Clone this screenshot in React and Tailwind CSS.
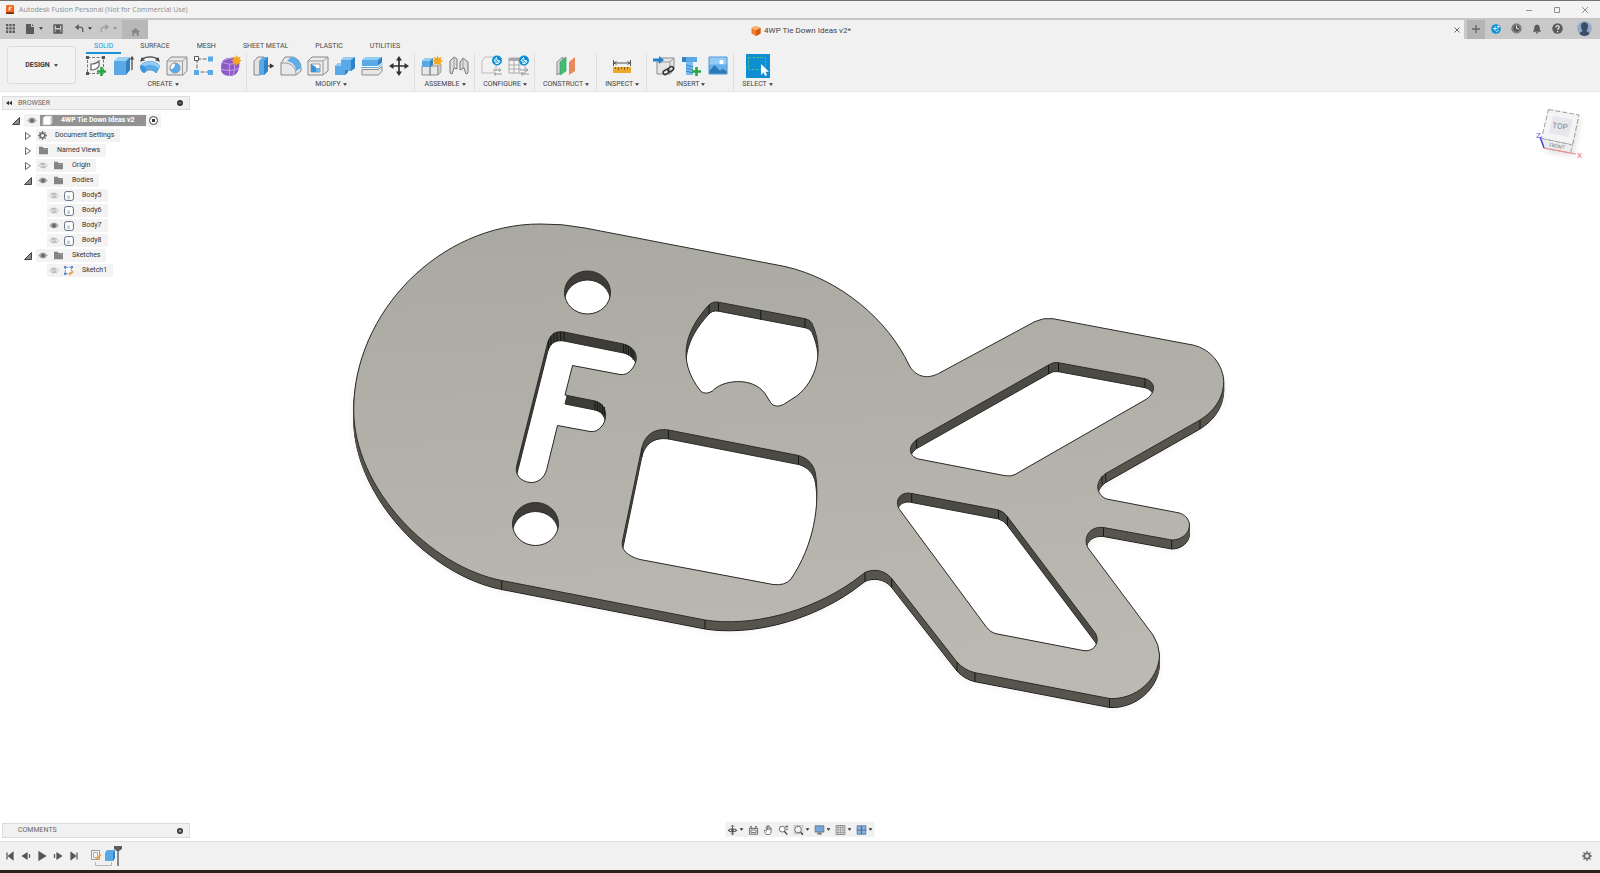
import React from 'react'
import clsx from 'clsx'

/* ---------- small shared pieces ---------- */

const Caret = ({ className }) => (
  <svg viewBox="0 0 6 4" className={clsx('w-1 h-[3px] shrink-0', className)} fill="#333">
    <path d="M0 0h6L3 4z" />
  </svg>
)

const Icon = ({ children, className = 'size-6', box = 24 }) => (
  <svg viewBox={`0 0 ${box} ${box}`} className={clsx('shrink-0', className)} fill="none" stroke="none">
    {children}
  </svg>
)

/* ---------- ribbon icons, 24px box ---------- */

const SketchIcon = () => (
  <Icon>
    <path d="M3.500 3.500h16v16h-16z" stroke="#777" strokeDasharray="3 1.500" />
    <path d="M7 16V10c4 0 6-1 8-3v5c-1 2-3 4-8 4z" fill="#fff" stroke="#666" strokeWidth="1.200" />
    <g fill="#555"><path d="M2 2h3v3H2zM18 2h3v3h-3zM2 18h3v3H2z" /></g>
    <path d="M17.500 13v9M13 17.500h9" stroke="#27a844" strokeWidth="2.600" />
  </Icon>
)
const ExtrudeIcon = () => (
  <Icon>
    <path d="M3 7l4-4h12l-4 4z" fill="#9bd0f5" />
    <path d="M3 7h12v14H3z" fill="#5aa9e6" />
    <path d="M15 7l4-4v13l-4 5z" fill="#2f83c6" />
    <path d="M21 4v12M19.500 5.500L21 3l1.500 2.500" stroke="#444" strokeWidth="1.200" />
  </Icon>
)
const RevolveIcon = () => (
  <Icon>
    <path d="M2 12c4-6 16-6 20 0l-4 7c-3-4-9-4-12 0z" fill="#5aabe8" stroke="#3b86c0" strokeWidth="0.700" />
    <path d="M2 12c4-6 16-6 20 0l-1.500 2.500c-4-5-13-5-17 0z" fill="#93ccf4" />
    <ellipse cx="5" cy="15" rx="2.500" ry="4" transform="rotate(-25 5 15)" fill="#3e93d8" />
    <path d="M4 5.500c4-3.500 12-3.500 16 0M3 7l3-1-2-2zM21 7l-3-1 2-2z" stroke="#444" strokeWidth="1.100" />
  </Icon>
)
const HoleIcon = () => (
  <Icon>
    <path d="M2 7l4-4h16v14l-4 4H2z" fill="#e8e8e8" stroke="#8a8a8a" />
    <path d="M2 7h15.500v14M17.500 7L22 3" stroke="#9a9a9a" />
    <circle cx="10" cy="14" r="5" fill="#fff" stroke="#8a8a8a" />
    <path d="M10 9a5 5 0 1 1-4.800 6C9 15.500 10 12.500 10 9z" fill="#5aabe8" />
  </Icon>
)
const PatternIcon = () => (
  <Icon>
    <path d="M5 5h14M5 5v13h14" stroke="#666" strokeDasharray="4 1.500" />
    <path d="M2.500 2.500h4v4h-4z" fill="#fff" stroke="#555" />
    <path d="M16 2.500h5v5h-5zM2 16h5v5H2zM16 16h5v5h-5z" fill="#58a9e6" />
  </Icon>
)
const FormIcon = () => (
  <Icon>
    <path d="M3 8c2-4 7-5 12-4 5 1 6 5 5 10-1 5-4 8-9 8-6 0-9-3-9-7 0-2 0-5 1-7z" fill="#8d5bc8" />
    <path d="M3 8c5 2 9 3 12 1l5-3M11 10c-1 4-1 8 0 12M2 15c5 2 13 2 18-1M15 9c1 4 1 8-1 12M5 6l8-2" stroke="#c8a7ee" strokeWidth="0.900" />
    <path d="M17.500 1l1.200 2.500 2.800-1-1 2.800L23 6.500l-2.500 1.200 1 2.800-2.800-1-1.200 2.500-1.200-2.500-2.800 1 1-2.800L12 6.500l2.500-1.200-1-2.800 2.800 1z" fill="#f5a623" />
  </Icon>
)
const PressPullIcon = () => (
  <Icon>
    <path d="M2 7l4-4h6l-4 4v14H2z" fill="#e4e4e4" stroke="#888" />
    <path d="M7 7l4-4h5v14l-4 4H7z" fill="#58a9e6" />
    <path d="M12 7l4-4v14l-4 4z" fill="#2f83c6" />
    <path d="M16 12h5M18.500 10.500l2.500 1.500-2.500 1.500z" stroke="#333" strokeWidth="1.200" fill="#333" />
  </Icon>
)
const FilletIcon = () => (
  <Icon>
    <path d="M2 9l4-6h6c6 0 10 5 10 11v3l-5 4H2z" fill="#e9e9e9" stroke="#888" />
    <path d="M8 7l4-4c6 0 10 5 10 11l-5 3c0-6-4-9-9-10z" fill="#5dade9" />
    <path d="M2 9h5c6 1 10 4 10 12" stroke="#999" />
  </Icon>
)
const ShellIcon = () => (
  <Icon>
    <path d="M2 7l4-4h16v14l-5 4H2z" fill="#ececec" stroke="#888" />
    <path d="M2 7h15v14M17 7l5-4" stroke="#999" />
    <path d="M5 10h9v8H5z" fill="#fff" stroke="#999" />
    <path d="M5 10l5 3v5H5z" fill="#3d92d6" /><path d="M10 14h4v4h-4z" fill="#6bb5ee" />
  </Icon>
)
const CombineIcon = () => (
  <Icon>
    <path d="M8 6l3-3h11v11l-4 3h-3v1l-3 3H2V12l3-3h3z" fill="#58a9e6" />
    <path d="M8 6l3-3h11l-4 3zM2 12l3-3h3v3z" fill="#96cdf5" />
    <path d="M18 6l4-3v11l-4 3zM12 21l3-3v-2h-3z" fill="#2f83c6" />
  </Icon>
)
const SplitIcon = () => (
  <Icon>
    <path d="M2 6l4-3h16v6l-4 3H2z" fill="#58a9e6" />
    <path d="M2 6l4-3h16l-4 3z" fill="#93ccf4" /><path d="M18 6l4-3v6l-4 3z" fill="#2f83c6" />
    <path d="M1 13h17l5-4" stroke="#fff" strokeWidth="2" /><path d="M1 13.500h17l5-4" stroke="#58a9e6" />
    <path d="M2 15.500h16l4-3v5L18 21H2z" fill="#e6e6e6" stroke="#8e8e8e" />
  </Icon>
)
const MoveIcon = () => (
  <Icon>
    <path d="M12 4v16M4 12h16" stroke="#333" strokeWidth="1.700" />
    <path d="M12 2l3 4.500H9zM12 22l3-4.500H9zM2 12l4.500-3v6zM22 12l-4.500-3v6z" fill="#333" />
  </Icon>
)
const ComponentIcon = () => (
  <Icon>
    <path d="M2 12h8v9H2zM10 12h8v9h-8z" fill="#e8e8e8" stroke="#8a8a8a" />
    <path d="M18 12l3-2v8l-3 3z" fill="#ccc" stroke="#8a8a8a" strokeWidth="0.700" />
    <path d="M2 7l3-3h8l-3 3v6H2z" fill="#58a9e6" /><path d="M2 7l3-3h8l-3 3z" fill="#96cdf5" /><path d="M10 7l3-3v7l-3 2z" fill="#2f83c6" />
    <path d="M17.500 1l1 3 3-1-1 3 3 1-3 1 1 3-3-1-1 3-1-3-3 1 1-3-3-1 3-1-1-3 3 1z" fill="#f5a623" />
  </Icon>
)
const JointIcon = () => (
  <Icon>
    <path d="M3 7l4-4 3 2v10l-3-1-2 6-2-1z" fill="#ddd" stroke="#777" /><path d="M7 3v11" stroke="#999" />
    <path d="M21 8l-5-4-3 4v8l4-2 2 6 2-1z" fill="#ddd" stroke="#777" /><path d="M16 4v10" stroke="#999" />
  </Icon>
)
const Sync = () => (
  <>
    <circle cx="17" cy="6.500" r="5" fill="#0a8fd6" />
    <path d="M16.500 3.500l-2.500 3.500h2v3l3.500-3.500h-2.500zM20 7c-.5 2-1.500 2.500-3 2.500" stroke="#fff" strokeWidth="0.900" />
    <path d="M13 16h8M19 14.500l2 1.500-2 1.500M22 20h-8M16 18.500L14 20l2 1.500" stroke="#9a9a9a" />
  </>
)
const ConfigureIcon = () => (
  <Icon>
    <path d="M2 7l3-4h11v13l-3 3H2z" fill="#f2f2f2" stroke="#bbb" /><Sync />
  </Icon>
)
const ConfigTableIcon = () => (
  <Icon>
    <path d="M2 4h16v15H2z" fill="#f6f6f6" stroke="#aaa" />
    <path d="M2 4h13v3H2z" fill="#aaa" /><path d="M2 11h14M2 15h12M7 7v12M12 7v12" stroke="#aaa" /><Sync />
  </Icon>
)
const ConstructIcon = () => (
  <Icon>
    <path d="M3 8l6-5v14l-6 4z" fill="#dcdcdc" stroke="#888" />
    <path d="M6 8l6-5v14l-6 4z" fill="#43bd72" stroke="#3a9c60" strokeWidth="0.700" />
    <path d="M15 8l6-5v14l-6 4z" fill="#ea8a5c" />
  </Icon>
)
const InspectIcon = () => (
  <Icon>
    <path d="M3.500 6v6M20.500 6v6M4 9h16M6.500 7.500L4 9l2.500 1.500M17.500 7.500L20 9l-2.500 1.500" stroke="#555" />
    <path d="M3 13h18v6H3z" fill="#eba82c" /><path d="M5.500 13v2M8.500 13v3M11.500 13v2M14.500 13v3M17.500 13v2" stroke="#8d6415" />
  </Icon>
)
const LinkIcon = () => (
  <Icon>
    <path d="M5 8l4-4h13v11l-4 5H5z" fill="#e6e6e6" stroke="#8b8b8b" /><path d="M5 8h13v12M18 8l4-4" stroke="#999" />
    <path d="M1 4.500h6V2l5 4-5 4V7.500H1z" fill="#2583cb" />
    <g stroke="#333" strokeWidth="1.500"><rect x="11" y="16" width="6" height="4" rx="2" transform="rotate(-35 14 18)" /><rect x="15.500" y="13.500" width="6" height="4" rx="2" transform="rotate(-35 18 15)" /></g>
  </Icon>
)
const FastenerIcon = () => (
  <Icon>
    <path d="M3 3h15v5H3z" fill="#58a9e6" /><path d="M3 3h4v5H3z" fill="#3282bf" />
    <path d="M7 8h7v13H7z" fill="#77bdf0" /><path d="M7 11l7 2M7 14l7 2M7 17l7 2" stroke="#3282bf" />
    <path d="M17.500 13v9M13 17.500h9" stroke="#27a844" strokeWidth="2.600" />
  </Icon>
)
const ImageIcon = () => (
  <Icon>
    <path d="M3 3h18v17H3z" fill="#68b1ec" stroke="#4b93cd" /><path d="M3.500 3.500h17v7h-17z" fill="#93cbf5" />
    <circle cx="15.500" cy="8" r="2.200" fill="#fff" /><path d="M3.500 17l5-6 5.500 6 2.500-2.500 4 3v2h-17z" fill="#2b79b8" />
  </Icon>
)
const SelectIcon = () => (
  <Icon>
    <path d="M0 0h24v24H0z" fill="#0e8ed3" />
    <path d="M2.500 3.500h17v12h-17z" stroke="#45c08a" strokeDasharray="2.500 1.500" />
    <path d="M15 10v11l2.500-2.500L19 22l2-1-1.500-3.200H23z" fill="#fff" />
  </Icon>
)

const GROUPS = [
  { label: 'CREATE', icons: [SketchIcon, ExtrudeIcon, RevolveIcon, HoleIcon, PatternIcon, FormIcon] },
  { label: 'MODIFY', icons: [PressPullIcon, FilletIcon, ShellIcon, CombineIcon, SplitIcon, MoveIcon] },
  { label: 'ASSEMBLE', icons: [ComponentIcon, JointIcon] },
  { label: 'CONFIGURE', icons: [ConfigureIcon, ConfigTableIcon] },
  { label: 'CONSTRUCT', icons: [ConstructIcon] },
  { label: 'INSPECT', icons: [InspectIcon] },
  { label: 'INSERT', icons: [LinkIcon, FastenerIcon, ImageIcon] },
  { label: 'SELECT', icons: [SelectIcon] },
]

const TABS = ['SOLID', 'SURFACE', 'MESH', 'SHEET METAL', 'PLASTIC', 'UTILITIES']

/* ---------- window chrome ---------- */

const TitleBar = () => (
  <header className="flex h-[18px] shrink-0 items-center border-t border-[#77706f] bg-[#f3f3f3] pl-1.5">
    <Icon className="size-[9px]" box={10}>
      <rect width="9" height="10" rx="1.500" fill="#f26b1d" /><path d="M0 8h9v1l-1 1H1L0 9z" fill="#6b2d0b" />
      <path d="M3.500 6.500v-4h3M3.500 4.500h2" stroke="#fff" />
    </Icon>
    <h1 className="ml-1 flex-1 text-[7px] leading-3 text-[#8c8c8c] font-['Open_Sans',sans-serif]">
      Autodesk Fusion Personal (Not for Commercial Use)
    </h1>
    <div className="flex gap-2 pr-[5px]">
      <button aria-label="Minimize" className="flex w-5 justify-center"><Icon className="size-2" box={8}><path d="M1 4.500h6" stroke="#777" strokeWidth="0.800" /></Icon></button>
      <button aria-label="Maximize" className="flex w-5 justify-center"><Icon className="size-2" box={8}><path d="M1.500 1.500h5v5h-5z" stroke="#777" strokeWidth="0.800" /></Icon></button>
      <button aria-label="Close" className="flex w-5 justify-center"><Icon className="size-2" box={8}><path d="M1 1l6 6M7 1L1 7" stroke="#777" strokeWidth="0.800" /></Icon></button>
    </div>
  </header>
)

const TabBar = () => (
  <div className="flex h-[21px] shrink-0 items-stretch border-t-2 border-[#c6c6c6] bg-[#c9c9c9]">
    <div className="flex items-center pb-0.5 pl-1.5">
      <button aria-label="Data panel">
        <Icon className="size-[9px]" box={9}><path d="M0 0h2.300v2.300H0zM3.300 0h2.300v2.300H3.300zM6.600 0h2.300v2.300H6.600zM0 3.300h2.300v2.300H0zM3.300 3.300h2.300v2.300H3.300zM6.600 3.300h2.300v2.300H6.600zM0 6.600h2.300v2.300H0zM3.300 6.600h2.300v2.300H3.300zM6.600 6.600h2.300v2.300H6.600z" fill="#5a5a5a" /></Icon>
      </button>
      <button aria-label="File" className="ml-2.5 flex items-center gap-1">
        <Icon className="size-[10px]" box={10}><path d="M1 0h5v3h3v7H1z" fill="#5a5a5a" /><path d="M7 0l2 2H7z" fill="#5a5a5a" /></Icon>
        <Caret />
      </button>
      <button aria-label="Save" className="ml-2.5">
        <Icon className="size-[10px]" box={10}><path d="M1 1h8v8H1z" stroke="#5a5a5a" strokeWidth="1.400" /><path d="M3 1h4v3H3zM2.500 5.500h5V9h-5z" fill="#5a5a5a" /></Icon>
      </button>
      <button aria-label="Undo" className="ml-3 flex items-center gap-1">
        <Icon className="size-[9px]" box={10}><path d="M1.500 3.500H6c2.500 0 3 2 2.500 5.500" stroke="#5a5a5a" strokeWidth="1.500" /><path d="M0 3.500L4 0v7z" fill="#5a5a5a" /></Icon>
        <Caret />
      </button>
      <button aria-label="Redo" className="ml-2 flex items-center gap-1">
        <Icon className="size-[9px]" box={10}><path d="M8.500 3.500H4C1.500 3.500 1 5.500 1.500 9" stroke="#9a9a9a" strokeWidth="1.300" /><path d="M10 3.500L6 0v7z" fill="#9a9a9a" /></Icon>
        <Caret className="opacity-40" />
      </button>
    </div>
    <button aria-label="Home" className="ml-[5px] flex w-[26px] items-center justify-center bg-[#b8b8b8] pt-1">
      <Icon className="size-[9px]" box={10}><path d="M5 1l5 4.500H8.500V10h-2V7h-3v3h-2V5.500H0z" fill="#858585" /></Icon>
    </button>
    <div className="flex flex-1 items-center bg-[#f1f1f1]">
      <div className="flex flex-1 items-center justify-center gap-[3px] pt-0.5">
        <Icon className="size-[10px]" box={10}><path d="M5 0l4.500 2v5.500L5 10 .5 7.500V2z" fill="#f08030" /><path d="M5 0l4.500 2L5 4.500.5 2z" fill="#fbb272" /><path d="M5 4.500L9.500 2v5.500L5 10z" fill="#d65a10" /></Icon>
        <span className="text-[8px] leading-3 text-[#444]">4WP Tie Down Ideas v2*</span>
      </div>
      <button aria-label="Close tab" className="pr-1">
        <Icon className="size-[6px]" box={6}><path d="M.5.5l5 5M5.500.5l-5 5" stroke="#666" /></Icon>
      </button>
    </div>
    <div className="flex items-center gap-2.5 pl-[3px] pr-2">
      <button aria-label="New tab" className="flex w-[18px] items-center justify-center self-stretch bg-[#b5b5b5] pb-0.5">
        <Icon className="size-2" box={8}><path d="M4 0v8M0 4h8" stroke="#666" strokeWidth="1.300" /></Icon>
      </button>
      <div className="-ml-1 flex items-center gap-2.5 pb-0.5">
        <button aria-label="Extensions">
          <Icon className="size-[10px]" box={11}><circle cx="5.500" cy="5.500" r="5.300" fill="#0e8fd6" /><path d="M4.500 2.500v5M2 5h5M8 1.500v3M6.500 3h3M8 6c0 1.500-1 2.500-2.500 2.500" stroke="#fff" strokeWidth="0.900" /></Icon>
        </button>
        <button aria-label="Job status">
          <Icon className="size-[11px]" box={11}><circle cx="5.500" cy="5.500" r="5" fill="#5a5a5a" /><circle cx="5.500" cy="5.500" r="4" stroke="#c9c9c9" strokeWidth="0.500" /><path d="M5.500 2.500v3.200H8" stroke="#ddd" /></Icon>
        </button>
        <button aria-label="Notifications">
          <Icon className="size-[10px]" box={11}><path d="M5.500.5c-2 .3-3 1.700-3 3.800C2.500 6.500 1.500 7 1 8.500h9C9.500 7 8.500 6.500 8.500 4.300c0-2.100-1-3.500-3-3.800zM4 9h3c0 2-3 2-3 0z" fill="#5a5a5a" /></Icon>
        </button>
        <button aria-label="Help">
          <Icon className="size-[11px]" box={11}><circle cx="5.500" cy="5.500" r="5.200" fill="#5a5a5a" /><path d="M3.800 4.500c0-2.500 3.600-2.300 3.500-.2 0 1.200-1.700 1.200-1.700 2.500M5.600 8v1.200" stroke="#eee" strokeWidth="1.200" /></Icon>
        </button>
        <button aria-label="Account" className="pl-1">
          <Icon className="size-[15px]" box={15}><circle cx="7.500" cy="7.500" r="7.300" fill="#94a9c6" /><path d="M4 5c0-5 7-5 7 0 0 2.500-.7 4-2 5 2 .5 3 1.500 3.500 2.700-3 3-7 3-10 0C3 11.500 4 10.500 6 10 4.700 9 4 7.500 4 5z" fill="#3b4c66" /></Icon>
        </button>
      </div>
    </div>
  </div>
)

const Ribbon = () => (
  <div className="flex h-[53px] shrink-0 border-b border-[#e4e4e4] bg-[#f1f1f1]">
    <div className="w-[79px] shrink-0 pl-[7px] pt-[7px]">
      <button className="flex h-[38px] w-[69px] items-center justify-center gap-1 rounded-[3px] border border-[#dcdcdc] bg-[#f3f3f3] text-[7px] font-bold text-[#3a3a3a]">
        DESIGN <Caret />
      </button>
    </div>
    <div>
      <nav className="flex h-[15px] gap-[11px] pl-[7px]">
        {TABS.map((tab, i) => (
          <button
            key={tab}
            className={clsx(
              'border-b-2 px-2 pt-0.5 text-[7px] leading-[11px]',
              i === 0 ? 'border-[#1a90d6] text-[#1a90d6]' : 'border-transparent text-[#4a4a4a]'
            )}
          >
            {tab}
          </button>
        ))}
      </nav>
      <div className="flex">
        {GROUPS.map(({ label, icons }, i) => (
          <div key={label} className={clsx('flex h-9 flex-col items-center pl-[3px] pr-[2px]', i < GROUPS.length - 1 && 'border-r border-[#dedede]')}>
            <div className="flex h-6">
              {icons.map((Glyph, n) => (
                <button key={n} aria-label={`${label} ${n + 1}`} className="flex w-[27px] items-center justify-center">
                  <Glyph />
                </button>
              ))}
            </div>
            <button className="flex items-center gap-0.5 px-[5px] text-[7px] leading-3 text-[#444]">
              {label} <Caret />
            </button>
          </div>
        ))}
      </div>
    </div>
  </div>
)

/* ---------- browser tree ---------- */

const Eye = ({ off }) => (
  <Icon className="h-[9px] w-[10px]" box={10}>
    <path d="M.5 5C3 1.500 7 1.500 9.500 5 7 8.500 3 8.500.5 5z" fill={off ? '#fafafa' : '#b5b5b5'} stroke={off ? '#a5a5a5' : '#858585'} strokeWidth="0.900" />
    <circle cx="5" cy="5" r="1.700" fill={off ? '#fafafa' : '#666'} stroke={off ? '#a5a5a5' : '#666'} strokeWidth="0.900" />
    {off && <path d="M2 2l6 6" stroke="#b2b2b2" />}
  </Icon>
)
const Folder = () => (
  <Icon className="h-[9px] w-[11px]" box={11}><path d="M0 1h4.500l1 1.500H11V10H0z" fill="#858585" /><path d="M5.500 4H11" stroke="#aaa" strokeWidth="0.700" /></Icon>
)
const Gear = ({ className = 'size-[9px]' }) => (
  <Icon className={className} box={12}>
    <circle cx="6" cy="6" r="3.200" stroke="#707070" strokeWidth="2.200" />
    <path d="M6 0v2.500M6 9.500V12M0 6h2.500M9.500 6H12M1.800 1.800l1.700 1.700M8.500 8.500l1.700 1.700M1.800 10.200l1.700-1.700M8.500 3.500l1.700-1.700" stroke="#707070" strokeWidth="1.700" />
  </Icon>
)
const BodyIcon = () => (
  <Icon className="size-[10px]" box={10}><rect x=".6" y=".6" width="8.800" height="8.800" rx="1.800" fill="#fff" stroke="#5d6c87" /><path d="M3 4.500h3v3.500H3z" fill="#cfcfcf" /></Icon>
)
const SketchNode = () => (
  <Icon className="size-[10px]" box={11}>
    <path d="M1.500 1.500h7l-1 6-6 1z" fill="#fff" stroke="#88a" strokeDasharray="3 1" />
    <path d="M0 0h2.500v2.500H0zM7.500 0H10v2.500H7.500zM0 7.500h2.500V10H0z" fill="#4c8fd0" /><path d="M5 10.500l.5-2 4-3.500L11 6.500l-4 3.500z" fill="#eda64a" />
  </Icon>
)
const DocNode = () => (
  <Icon className="size-[11px]" box={11}><path d="M1 3l2-2h7v7l-2 2H1z" fill="#fff" stroke="#bbb" strokeWidth="0.800" /><path d="M8 3l2-2v7l-2 2z" fill="#d9d9d9" /></Icon>
)

const Twist = ({ open }) => (
  <Icon className="mr-1 size-2" box={8}>
    {open ? <path d="M7.500.5v7H.5z" fill="#8a8a8a" stroke="#444" /> : <path d="M1.500.5v7l5-3.500z" fill="#fff" stroke="#555" strokeWidth="0.900" />}
  </Icon>
)

const TREE = [
  { text: 'Document Settings', level: 1, open: false, icon: Gear },
  { text: 'Named Views', level: 1, open: false, icon: Folder },
  { text: 'Origin', level: 1, open: false, eye: 'off', icon: Folder },
  { text: 'Bodies', level: 1, open: true, eye: 'on', icon: Folder },
  { text: 'Body5', level: 2, eye: 'off', icon: BodyIcon },
  { text: 'Body6', level: 2, eye: 'off', icon: BodyIcon },
  { text: 'Body7', level: 2, eye: 'on', icon: BodyIcon },
  { text: 'Body8', level: 2, eye: 'off', icon: BodyIcon },
  { text: 'Sketches', level: 1, open: true, eye: 'on', icon: Folder },
  { text: 'Sketch1', level: 2, eye: 'off', icon: SketchNode },
]

const Browser = () => (
  <aside className="absolute left-[2px] top-1 w-[188px] text-[7px] leading-[13px] text-[#333]">
    <div className="flex h-[14px] items-center border border-[#dcdcdc] bg-[#f1f1f1] pl-[3px] pr-1.5">
      <button aria-label="Collapse"><Icon className="h-[6px] w-[6px]" box={7}><path d="M3.500 1v5L0 3.500zM7 1v5L3.500 3.500z" fill="#333" /></Icon></button>
      <span className="ml-1.5 flex-1 text-[#666]">BROWSER</span>
      <button aria-label="Browser options"><Icon className="size-[6px]" box={6}><circle cx="3" cy="3" r="3" fill="#333" /><path d="M1.500 3h3" stroke="#999" /></Icon></button>
    </div>
    <ul className="pt-[3px]">
      <li className="flex h-[15px] items-center pl-[10px]">
        <Twist open />
        <div className="flex h-[13px] items-center bg-[#f3f3f3] pl-[3px]">
          <Eye />
          <span className="ml-[3px] flex h-[11px] items-center bg-[#929292] pl-0.5 pr-[11px] font-bold leading-[11px] text-white">
            <DocNode /><span className="ml-2">4WP Tie Down Ideas v2</span>
          </span>
          <input
            type="radio"
            aria-label="Activate component"
            defaultChecked
            className="mx-[3px] size-[9px] appearance-none rounded-full border border-[#444] bg-[radial-gradient(circle,#333_28%,#fff_34%)]"
          />
        </div>
      </li>
      {TREE.map(({ text, level, open, eye, icon: Glyph }) => (
        <li key={text} className={clsx('flex h-[15px] items-center', level === 1 ? 'pl-[22px]' : 'pl-[45px]')}>
          {open !== undefined && <Twist open={open} />}
          <div className="flex h-[13px] items-center gap-[5px] bg-[#f3f3f3] pl-[2px] pr-1.5">
            {eye && <Eye off={eye === 'off'} />}
            <Glyph />
            <span className="ml-[3px]">{text}</span>
          </div>
        </li>
      ))}
    </ul>
  </aside>
)

/* ---------- model ---------- */

const BODY =
  'M540 224C440 224 353.700 312 353.700 410 353.700 488 430 566.500 501.700 580.500L705 620C750 627 808 613 853 581.500L865 572.500C872 569 884 569 891.700 578.500L956.700 661.700Q964 670 975 672.700L1109.500 698.500C1135 700 1159 680 1159.500 655Q1159 644 1153 635L1087.700 547.500C1083 538 1089 526 1103.500 527.500L1171.700 540C1182 540 1189.500 533 1189.500 525 1189 518 1184 514 1178 512.700L1106.700 499C1096 495 1094 482 1105.700 473.500L1200 420C1216 410 1224 396 1223.700 380 1222 362 1208 347 1190 344.500L1053 318.700Q1043 317.500 1035 321.500L938.500 373.500C926 380 915 376 909 365 888 320 840 279 785 266.500L585 228Q562 223.500 540 224Z'

const HOLES = [
  // pin holes
  'M564.500 292.500a23 21.500 0 1 0 46 0a23 21.500 0 1 0-46 0z',
  'M512.500 524a23 21.500 0 1 0 46 0a23 21.500 0 1 0-46 0z',
  // initial cut-out
  'M516.500 466.500L546.700 346.700C549 335 554 330.500 564 332L623.500 344C638 348 639 360 632 369Q627 375.500 620 374.500L572.500 365.500 565 395 595 401C607 404 608 418 602 426Q597 432.500 590 431.500L557.500 425.500 546.700 469.500C544 479 537 483 530 482.500 520 481 515 475 516.500 466.500Z',
  // bottle opener
  'M718.500 302.200Q712 301 708 306C688 328 674 358 701 391.500Q706 395 712.500 391C722 380 752 376 765 393.500L770.700 402.700Q775 408.500 783.500 404.500L796.700 396C816 381 825 352 812 323.500Q810 319.500 805 318.700Z',
  // large window
  'M668.500 430L798.500 455.500C808 458 814 465 815.500 474 820 505 814 545 791 579Q785 586 773 584.500L640 559.500C628 556 620 550 622.700 540L641.700 448.500C645 434 655 428 668.500 430Z',
  // tail windows
  'M1058.500 362.700L1145 378.700C1156 382 1156 392 1146.700 399L1015 474.500Q1011 476.800 1005 475.700L918.500 459C908 456 908 446 916.700 439.500L1048.500 365Q1053 361.500 1058.500 362.700Z',
  'M911.700 493.500L998.500 510Q1004 511.500 1007.500 516.700L1095 632.700C1101 642 1094 652.500 1083 650.500L995 633.500Q991 632.500 986.700 627.500L899.500 509.500C894 501 900 491 911.700 493.500Z',
]

// vertical edges on the visible side walls: [x, y of the top end]
const SEAMS = [
  [501.700, 580.500], [705, 620], [865, 572.500], [891.700, 578.500], [957, 662], [975, 672.700], [1109.500, 698.500],
  [1103.500, 527.500], [1171.700, 540], [1105.700, 473.500], [1200, 420], [1102, 476],
  [718.500, 302.200], [760.700, 310.500], [805, 318.700], [709, 305],
  [668.500, 430], [798.500, 455.500], [642, 448],
  [1048.500, 365], [1058.500, 362.700], [1145, 378.700], [916.700, 439.500],
  [911.700, 493.500], [998.500, 510], [1007.500, 516.700],
  [564, 332], [560.500, 331.800], [557, 332.200], [554, 333.500], [551, 336], [548.500, 340],
  [623.500, 344], [626, 345], [628.500, 346.200], [631, 348], [633, 350.500],
  [595, 401.500], [597.500, 402], [600, 403], [602.500, 404.700], [604.500, 407],
]

const DEPTH = 9
const LAYERS = [8, 7, 6, 5, 4, 3, 2, 1]

const Model = () => (
  <svg viewBox="0 92 1600 749" className="size-full" preserveAspectRatio="xMidYMid meet">
    <defs>
      <linearGradient id="face" x1="0" y1="0" x2="0.100" y2="1">
        <stop offset="0" stopColor="#aaa9a1" />
        <stop offset="1" stopColor="#bbb9b1" />
      </linearGradient>
      <filter id="soft" x="-10%" y="-10%" width="120%" height="120%"><feGaussianBlur stdDeviation="4" /></filter>
      {HOLES.map((d, i) => (
        <clipPath key={i} id={`hole-${i}`}><path d={d} /></clipPath>
      ))}
    </defs>
    <path d={BODY} transform="translate(0 9)" fill="#000" opacity="0.080" filter="url(#soft)" />
    <path d={BODY} transform={`translate(0 ${DEPTH})`} fill="#57554e" stroke="#1d1d1b" />
    {LAYERS.map((y) => (
      <path key={y} d={BODY} transform={`translate(0 ${y})`} fill="#57554e" stroke="#57554e" strokeWidth="0.600" />
    ))}
    <path d={BODY} fill="url(#face)" stroke="#2c2c29" strokeLinejoin="round" />
    {HOLES.map((d, i) => (
      <g key={i}>
        <path d={d} fill={i < 3 ? '#3d3c38' : '#4b4a44'} />
        <g clipPath={`url(#hole-${i})`}>
          <path d={d} transform={`translate(0 ${DEPTH})`} fill="#fff" stroke="#2c2c29" />
        </g>
        <path d={d} stroke="#2c2c29" fill="none" strokeLinejoin="round" />
      </g>
    ))}
    {SEAMS.map(([x, y]) => (
      <path key={`${x}-${y}`} d={`M${x} ${y}v${DEPTH}`} stroke="#161614" strokeWidth="1" />
    ))}
  </svg>
)

const ViewCube = () => (
  <svg viewBox="1530 100 70 64" className="absolute right-0 top-2 h-16 w-[70px]">
    <path d="M1549 112L1580 118 1573 156 1546 152z" fill="#000" opacity="0.120" className="blur-[3px]" />
    <path d="M1548.500 109.500L1579 115 1572.500 145 1541.500 138.500z" fill="#f4f4f5" stroke="#777" strokeWidth="0.700" strokeDasharray="5 2" />
    <path d="M1541.500 138.500L1572.500 145 1570.500 153 1544 148z" fill="#ececee" stroke="#888" strokeWidth="0.700" strokeDasharray="5 2" />
    <path d="M1553 116L1573 119.500 1568.500 137 1549 133z" fill="#e6e7ec" />
    <text x="1560" y="129" textAnchor="middle" transform="rotate(7 1560 126)" className="text-[8px] font-['Roboto',sans-serif]" fill="#7d8590">TOP</text>
    <text x="1557" y="148" textAnchor="middle" transform="rotate(10 1557 146)" className="text-[5px] font-['Roboto',sans-serif]" fill="#777">FRONT</text>
    <path d="M1540 137l4 11" stroke="#3c3ce0" strokeWidth="1.300" />
    <path d="M1544 148l32 6" stroke="#e88" strokeWidth="1.200" />
    <text x="1536" y="138" className="text-[8px] font-['Roboto',sans-serif]" fill="#5a5af0">Z</text>
    <text x="1577" y="158" className="text-[8px] font-['Roboto',sans-serif]" fill="#ef6a6a">X</text>
  </svg>
)

/* ---------- bottom bars ---------- */

const NAV = [
  { name: 'Orbit', caret: true, art: <><path d="M6 0v12M4.500 2L6 0l1.500 2M4.500 10L6 12l1.500-2" stroke="#555" /><path d="M1 6.500c2-2.500 8-2.500 10 0-2 2.500-8 2.500-10 0z" stroke="#555" strokeWidth="1.300" /><circle cx="6" cy="6.500" r="1.500" fill="#444" /></> },
  { name: 'Look at', art: <><path d="M1 4h10v7H1zM3 4V1.500M9 4V1.500M2 2h2M8 2h2" stroke="#666" strokeWidth="1.200" /><path d="M3 6h6v3H3z" stroke="#666" /></> },
  { name: 'Pan', art: <path d="M3 11.500C2 9 .5 7.500.8 6.500c1-.7 1.700.3 2.500 1V2.500c.2-1 1.300-1 1.500 0V1.300c.2-1 1.300-1 1.500 0v1c.2-.8 1.300-.8 1.500.2V4c.3-.8 1.500-.7 1.500.3 0 3 0 5-1.500 7.200zM4.800 2.500v3.500M6.400 2.500V6M8 4v2.500" fill="#fff" stroke="#555" strokeWidth="0.900" /> },
  { name: 'Zoom', art: <><circle cx="4.500" cy="5" r="3.500" fill="#fff" stroke="#555" /><path d="M7 7.500l3.500 4" stroke="#444" strokeWidth="1.600" /><path d="M10 0v4M8 2h4M8.500 5.500h3" stroke="#555" strokeWidth="0.900" /></> },
  { name: 'Fit', caret: true, art: <><path d="M.5.5h11v10H.5z" stroke="#999" strokeDasharray="2 1" /><circle cx="5.500" cy="5.500" r="4" fill="#eef6f2" stroke="#555" /><path d="M8.500 8.500l3 3.500" stroke="#444" strokeWidth="1.600" /></> },
  { name: 'Display settings', caret: true, art: <><path d="M.5 1h11v7.500H.5z" fill="#78a4d8" stroke="#5b6d86" /><path d="M4 9h4l1 2.500H3z" fill="#777" /></> },
  { name: 'Grid', caret: true, art: <><path d="M.5.5h11v11H.5z" fill="#ddd" stroke="#777" /><path d="M3 0v12M6 0v12M9 0v12M0 3h12M0 6h12M0 9h12" stroke="#888" strokeWidth="0.700" /></> },
  { name: 'Viewports', caret: true, art: <><path d="M.5 1h11v10H.5z" fill="#8db2e0" stroke="#4f6c96" /><path d="M6 1v10M0 6h12" stroke="#4f6c96" strokeWidth="1.300" /></> },
]

const NavBar = () => (
  <div className="absolute bottom-1 left-1/2 flex h-[15px] -translate-x-1/2 items-center gap-[5px] bg-[#f1f1f1] px-0.5">
    {NAV.map(({ name, caret, art }) => (
      <button key={name} aria-label={name} className="flex items-center gap-0.5">
        <Icon className="size-[10px]" box={12}>{art}</Icon>
        {caret && <Caret />}
      </button>
    ))}
  </div>
)

const Comments = () => (
  <div className="absolute bottom-[3px] left-[2px] flex h-[15px] w-[188px] items-center border border-[#dcdcdc] bg-[#f1f1f1] pl-[15px] pr-1.5 text-[7px] leading-[13px] text-[#666]">
    <span className="flex-1">COMMENTS</span>
    <button aria-label="Add comment"><Icon className="size-[6px]" box={6}><circle cx="3" cy="3" r="3" fill="#333" /><path d="M3 1.500v3M1.500 3h3" stroke="#ddd" strokeWidth="0.800" /></Icon></button>
  </div>
)

const PLAYBACK = [
  { name: 'Go to start', d: 'M2 1.500v7M8 1.500v7L3.500 5z' },
  { name: 'Step back', d: 'M6 2v6L1.500 5zM8.500 3v4' },
  { name: 'Play', d: 'M2 1v8L8.500 5z' },
  { name: 'Step forward', d: 'M4 2v6l4.500-3zM1.500 3v4' },
  { name: 'Go to end', d: 'M8 1.500v7M2 1.500v7L6.500 5z' },
]

const Timeline = () => (
  <footer className="flex h-[32px] shrink-0 items-center border-b-[3px] border-t border-b-[#2b211c] border-t-[#dedede] bg-[#f1f1f1] pl-[5px] pr-2">
    <div className="flex gap-1.5">
      {PLAYBACK.map(({ name, d }) => (
        <button key={name} aria-label={name}>
          <Icon className="size-[10px]" box={10}><path d={d} fill="#555" stroke="#555" strokeWidth="1.200" /></Icon>
        </button>
      ))}
    </div>
    <svg viewBox="0 0 34 22" className="ml-2.5 h-[22px] w-[34px]" fill="none">
      <path d="M2.500 5.500h8v9h-8z" fill="#f8f8f8" stroke="#999" /><path d="M4.500 7.500h4v5h-4z" stroke="#aaa" />
      <path d="M6 14l5-5 1.500 1.500-5 4.500z" fill="#eea04c" />
      <path d="M16 8l2-3h8v8l-2 3h-8z" fill="#58a9e6" /><path d="M24 8l2-3v8l-2 3z" fill="#2f83c6" />
      <path d="M6.500 17v3.500h16V17" stroke="#b5b5b5" />
      <path d="M25 1h8v3l-3 2h-2l-3-2z" fill="#5c5c5c" /><path d="M29 4v17" stroke="#5c5c5c" strokeWidth="1.400" />
    </svg>
    <button aria-label="Timeline settings" className="ml-auto"><Gear className="size-[10px]" /></button>
  </footer>
)

export default function App() {
  return (
    <div className="flex h-screen flex-col overflow-hidden bg-white text-[#333] font-['Roboto',sans-serif]">
      <TitleBar />
      <TabBar />
      <Ribbon />
      <main className="relative min-h-0 flex-1">
        <Model />
        <Browser />
        <ViewCube />
        <NavBar />
        <Comments />
      </main>
      <Timeline />
    </div>
  )
}
